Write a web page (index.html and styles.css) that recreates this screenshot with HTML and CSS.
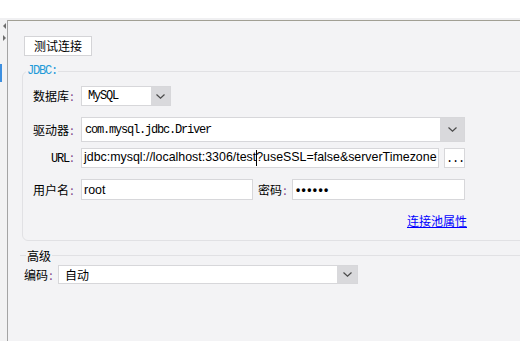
FILE: index.html
```html
<!DOCTYPE html>
<html lang="zh">
<head>
<meta charset="utf-8">
<title>JDBC</title>
<link rel="stylesheet" href="styles.css">
</head>
<body>
<div class="topbar"></div>
<div class="strip"></div>
<div class="main">
  <div class="side">
    <svg class="arrow first" width="7" height="6" viewBox="0 0 7 6"><polygon points="6,0 6,6 3,3" fill="#6e6e6e"/></svg>
    <svg class="arrow second" width="7" height="6" viewBox="0 0 7 6"><polygon points="3,0 3,6 6,3" fill="#6e6e6e"/></svg>
    <div class="sel-mark"></div>
  </div>
  <div class="panel">
    <button class="btn" type="button">测试连接</button>

    <fieldset class="jdbc">
      <legend class="mono blue">JDBC:</legend>
      <div class="rows">
        <div class="row r1">
          <div class="label">数据库<span class="c">:</span></div>
          <div class="select s-db">
            <div class="val mono">MySQL</div>
            <div class="drop"><svg width="9" height="5" viewBox="0 0 9 5"><polyline points="0.5,0.5 4.5,4.2 8.5,0.5" fill="none" stroke="#4a4a4a" stroke-width="1.2"/></svg></div>
          </div>
        </div>
        <div class="row r2">
          <div class="label">驱动器<span class="c">:</span></div>
          <div class="select s-drv">
            <div class="val mono">com.mysql.jdbc.Driver</div>
            <div class="drop wide"><svg width="9" height="5" viewBox="0 0 9 5"><polyline points="0.5,0.5 4.5,4.2 8.5,0.5" fill="none" stroke="#4a4a4a" stroke-width="1.2"/></svg></div>
          </div>
        </div>
        <div class="row r3">
          <div class="label"><span class="mono">URL</span><span class="c">:</span></div>
          <div class="input url"><span class="url-text">jdbc:mysql://localhost:3306/test<span class="caret"></span>?useSSL=false&amp;serverTimezone</span></div>
          <div class="more mono">...</div>
        </div>
        <div class="row r4">
          <div class="label">用户名<span class="c">:</span></div>
          <div class="input user">root</div>
          <div class="pw-label">密码<span class="c">:</span></div>
          <div class="input pw">••••••</div>
        </div>
        <div class="row r5">
          <a class="link" href="#">连接池属性</a>
        </div>
      </div>
    </fieldset>

    <fieldset class="adv">
      <legend>高级</legend>
      <div class="row enc">
        <div class="enc-label">编码<span class="c">:</span></div>
        <div class="select s-enc">
          <div class="val">自动</div>
          <div class="drop"><svg width="9" height="5" viewBox="0 0 9 5"><polyline points="0.5,0.5 4.5,4.2 8.5,0.5" fill="none" stroke="#4a4a4a" stroke-width="1.2"/></svg></div>
        </div>
      </div>
    </fieldset>
  </div>
</div>
</body>
</html>
```
FILE: styles.css
```css
html, body {
  margin: 0;
  padding: 0;
}
body {
  width: 520px;
  height: 341px;
  overflow: hidden;
  background: #ffffff;
  font-family: "Noto Sans CJK SC", "Liberation Sans", sans-serif;
  font-size: 12px;
  color: #000;
}
.topbar {
  height: 18px;
  background: #ffffff;
}
.strip {
  height: 2px;
  background: #f0f0f2;
}
.main {
  display: flex;
  height: 321px;
}
.side {
  width: 7px;
  flex: none;
  background: #f2f2f3;
  border-right: 1px solid #a4a4a4;
  display: flex;
  flex-direction: column;
  padding-top: 3px;
}
.arrow {
  display: block;
}
.arrow.second {
  margin-top: 6px;
}
.sel-mark {
  width: 2px;
  height: 18px;
  margin-top: 23px;
  background: #3d8fe0;
}
.panel {
  flex: 1;
  min-width: 0;
  background: #f3f3f5;
  border-top: 1px solid #a19f94;
  overflow: hidden;
}
.btn {
  display: flex;
  align-items: center;
  justify-content: center;
  margin: 15px 0 0 16px;
  width: 68px;
  height: 20px;
  padding: 0;
  box-sizing: border-box;
  border: 1px solid #d4d4d7;
  border-radius: 0;
  background: #ffffff;
  font-family: "Noto Sans CJK SC", sans-serif;
  font-size: 12px;
  line-height: 16px;
  color: #000;
}
.mono {
  font-family: "Liberation Mono", monospace;
  font-size: 12px;
  letter-spacing: -1.2px;
}
.blue {
  color: #1e9ad8;
}
.jdbc {
  margin: 8px 0 0 14px;
  padding: 7px 0 11px 3px;
  width: 600px;
  min-width: 0;
  box-sizing: border-box;
  border: 1px solid #e1e1e4;
  border-radius: 6px;
}
.jdbc legend {
  padding: 0 1px;
  line-height: 15px;
}
.rows {
  width: 441px;
  display: flex;
  flex-direction: column;
}
.row {
  display: flex;
  align-items: center;
}
.r1 { height: 20px; }
.r2 { height: 25px; margin-top: 11px; }
.r3 { height: 20px; margin-top: 6px; }
.r4 { height: 21px; margin-top: 11px; }
.r5 { height: 16px; margin-top: 13px; justify-content: flex-end; }
.label {
  width: 49px;
  flex: none;
  text-align: right;
  margin-right: 6px;
  white-space: nowrap;
  line-height: 16px;
}
.c {
  display: inline-block;
  width: 6px;
  text-align: center;
  color: #7a3f86;
  letter-spacing: 0;
}
.select {
  flex: none;
  display: flex;
  height: 100%;
  box-sizing: border-box;
  border: 1px solid #d7d7da;
  background: #ffffff;
}
.select .val {
  flex: 1;
  display: flex;
  align-items: center;
  padding-left: 6px;
  white-space: nowrap;
  overflow: hidden;
}
.drop {
  width: 19px;
  flex: none;
  background: #d9d9dc;
  display: flex;
  align-items: center;
  justify-content: center;
}
.drop.wide {
  width: 24px;
}
.s-db { width: 90px; }
.s-drv { width: 384px; }
.s-drv .val { padding-left: 3px; }
.input {
  flex: none;
  height: 100%;
  box-sizing: border-box;
  border: 1px solid #d7d7da;
  background: #ffffff;
  display: flex;
  align-items: center;
  padding-left: 2px;
  white-space: nowrap;
  overflow: hidden;
}
.url {
  width: 358px;
  font-family: "Liberation Sans", Arial, sans-serif;
  font-size: 12.4px;
}
.url-text {
  white-space: nowrap;
}
.caret {
  display: inline-block;
  width: 0;
  height: 16px;
  border-left: 1px solid #000;
  margin-right: -1px;
  vertical-align: middle;
}
.more {
  flex: none;
  width: 21px;
  height: 100%;
  margin-left: 5px;
  box-sizing: border-box;
  border: 1px solid #d7d7da;
  background: #ffffff;
  display: flex;
  align-items: flex-end;
  justify-content: center;
  line-height: 14px;
  padding-bottom: 1px;
  padding-left: 1px;
}
.user {
  width: 172px;
  font-family: "Liberation Sans", Arial, sans-serif;
  font-size: 12.4px;
}
.pw-label {
  flex: none;
  margin-left: 5px;
  margin-right: 4px;
  white-space: nowrap;
  line-height: 16px;
}
.pw {
  width: 173px;
  font-family: "Liberation Sans", Arial, sans-serif;
  font-size: 12px;
  letter-spacing: 1.4px;
  padding-left: 3px;
  font-weight: bold;
}
.link {
  color: #0000ff;
  text-decoration: underline;
  line-height: 16px;
}
.adv {
  margin: 7px 0 0 12px;
  padding: 2px 0 0 6px;
  width: 600px;
  min-width: 0;
  box-sizing: border-box;
  border: 0;
  border-top: 1px solid #e1e1e4;
}
.adv legend {
  padding: 0 1px;
  line-height: 15px;
}
.enc {
  height: 19px;
  margin-left: -2px;
}
.enc-label {
  flex: none;
  margin-right: 4px;
  white-space: nowrap;
  line-height: 16px;
}
.s-enc {
  width: 300px;
}
.s-enc .val {
  padding-left: 6px;
}
.s-enc .drop {
  width: 20px;
}
```
